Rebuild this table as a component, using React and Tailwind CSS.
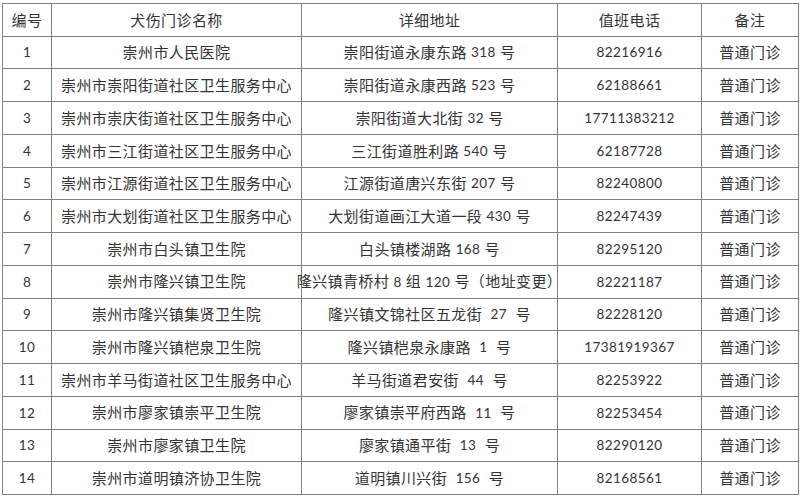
import React from 'react';

const rows = [
  ['1', '崇州市人民医院', '崇阳街道永康东路 318 号', '82216916'],
  ['2', '崇州市崇阳街道社区卫生服务中心', '崇阳街道永康西路 523 号', '62188661'],
  ['3', '崇州市崇庆街道社区卫生服务中心', '崇阳街道大北街 32 号', '17711383212'],
  ['4', '崇州市三江街道社区卫生服务中心', '三江街道胜利路 540 号', '62187728'],
  ['5', '崇州市江源街道社区卫生服务中心', '江源街道唐兴东街 207 号', '82240800'],
  ['6', '崇州市大划街道社区卫生服务中心', '大划街道画江大道一段 430 号', '82247439'],
  ['7', '崇州市白头镇卫生院', '白头镇楼湖路 168 号', '82295120'],
  ['8', '崇州市隆兴镇卫生院', '隆兴镇青桥村 8 组 120 号（地址变更）', '82221187'],
  ['9', '崇州市隆兴镇集贤卫生院', '隆兴镇文锦社区五龙街  27  号', '82228120'],
  ['10', '崇州市隆兴镇桤泉卫生院', '隆兴镇桤泉永康路  1  号', '17381919367'],
  ['11', '崇州市羊马街道社区卫生服务中心', '羊马街道君安街  44  号', '82253922'],
  ['12', '崇州市廖家镇崇平卫生院', '廖家镇崇平府西路  11  号', '82253454'],
  ['13', '崇州市廖家镇卫生院', '廖家镇通平街  13  号', '82290120'],
  ['14', '崇州市道明镇济协卫生院', '道明镇川兴街  156  号', '82168561'],
];

// digits in the source are a narrower latin face, so shrink them a bit
const Txt = ({ s }) =>
  s.split(/(\d+)/).map((part, i) =>
    i % 2 ? (
      <span key={i} className="text-[13.5px]">
        {part}
      </span>
    ) : (
      part
    )
  );

const Cell = ({ children }) => (
  <div className="flex items-center justify-center border-r border-b border-[#808080] whitespace-pre">
    {children}
  </div>
);

export default function App() {
  return (
    <div className="w-[800px] h-[498px] bg-white pt-[3px] pl-[2px] text-[#333] text-[15px] tracking-[0.4px] font-['Lato','Noto_Sans_CJK_SC',sans-serif]">
      <div className="w-[797px] border-l border-t border-[#808080] grid grid-cols-[49px_250px_256px_144px_97px] grid-rows-[repeat(15,minmax(0,1fr))] h-[492px]">
        <Cell>编号</Cell>
        <Cell>犬伤门诊名称</Cell>
        <Cell>详细地址</Cell>
        <Cell>值班电话</Cell>
        <Cell>备注</Cell>
        {rows.map((r) => (
          <React.Fragment key={r[0]}>
            <Cell><Txt s={r[0]} /></Cell>
            <Cell>{r[1]}</Cell>
            <Cell><Txt s={r[2]} /></Cell>
            <Cell><Txt s={r[3]} /></Cell>
            <Cell>普通门诊</Cell>
          </React.Fragment>
        ))}
      </div>
    </div>
  );
}
